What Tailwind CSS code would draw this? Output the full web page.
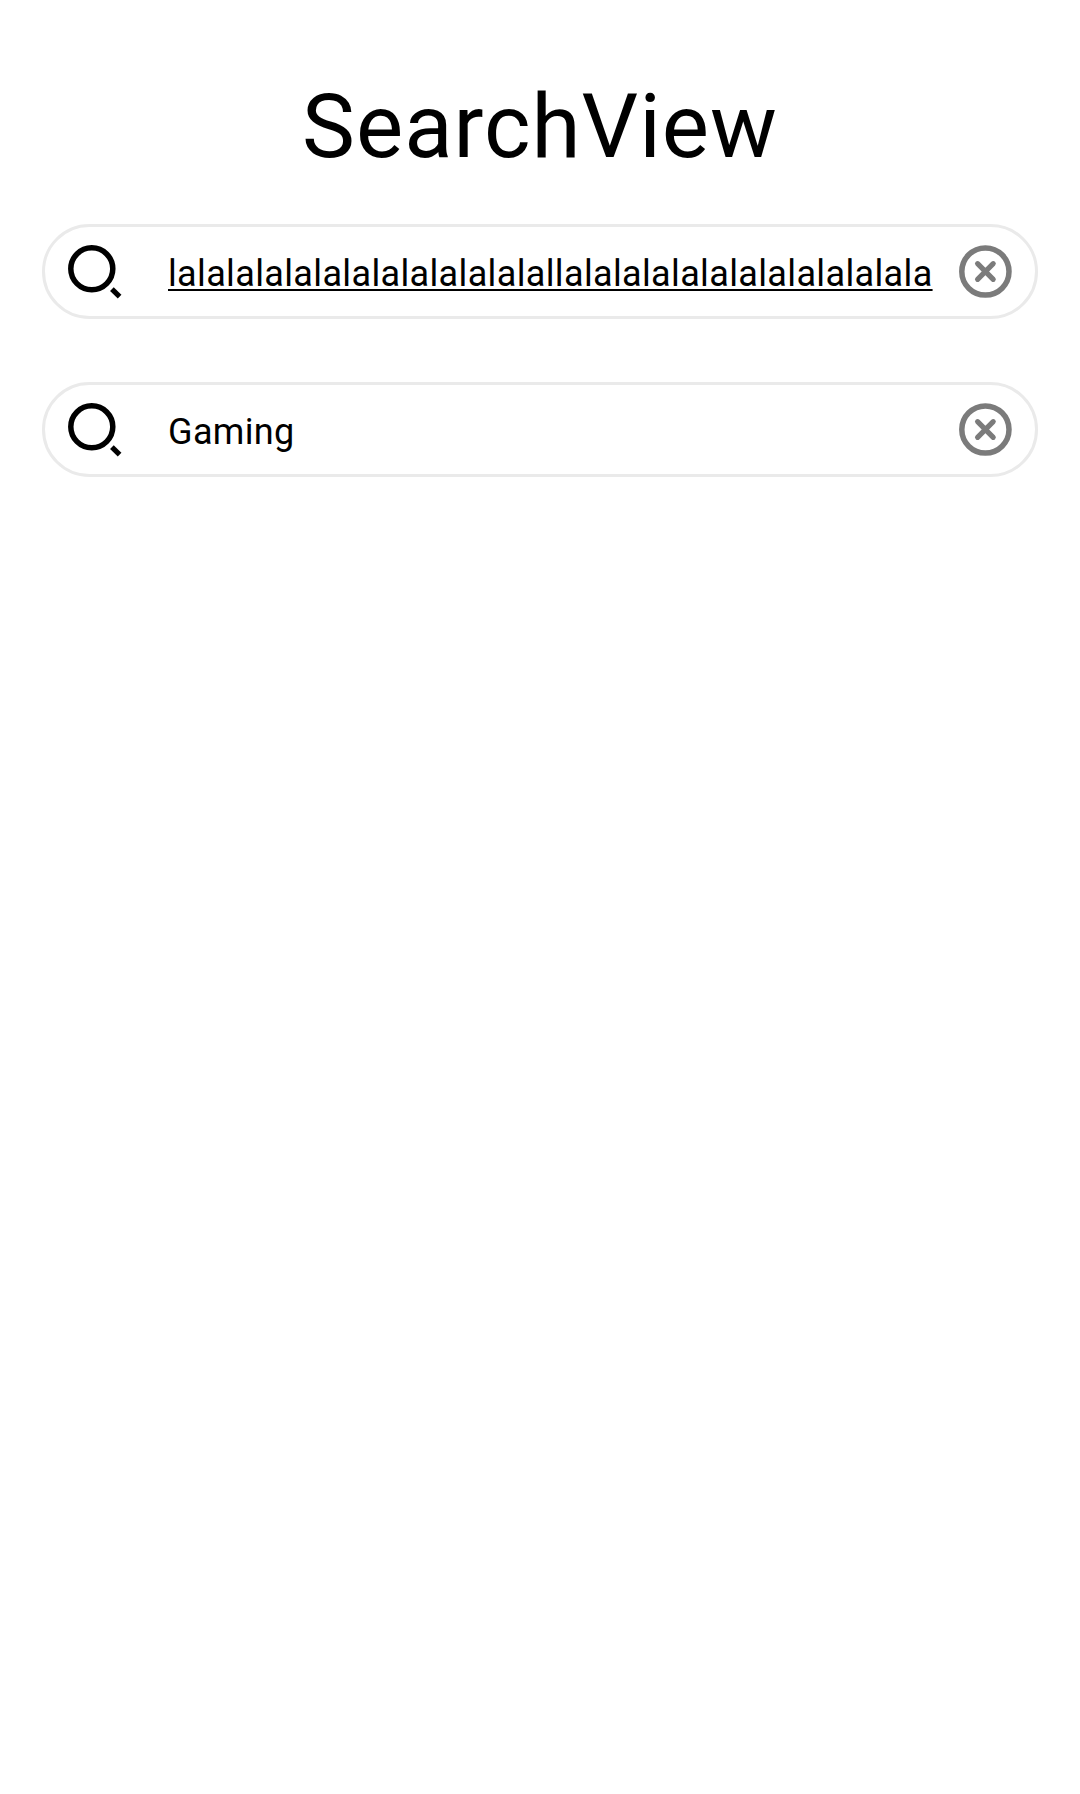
<!DOCTYPE html>
<html lang="en">
<head>
<meta charset="utf-8">
<title>SearchView</title>
<script src="https://cdn.jsdelivr.net/npm/@tailwindcss/browser@4"></script>
</head>
<body class="bg-white text-black font-[Roboto,sans-serif]">
<main class="flex h-[1794px] w-[1080px] flex-col px-[42px] pt-[75px]">
  <h1 class="h-[104px] text-center text-[89px] leading-[104px] font-normal tracking-[1px] whitespace-nowrap">SearchView</h1>
  <div class="mt-[45px] flex flex-col gap-[63px]">
    <div class="flex h-[95px] items-center rounded-full border-3 border-[#eaeaea] pr-[23px] pl-[23px]">
      <svg class="h-[54px] w-[54px] shrink-0" viewBox="0 0 54 54" fill="none" stroke="#000"><circle cx="23.8" cy="23.8" r="21" stroke-width="5.5"/><path d="M43.9 44.1L51.6 51.6" stroke-width="5.2"/></svg>
      <span class="ml-[46px] flex-1 pt-[4px] text-[36px] leading-[44px] tracking-[0.36px] whitespace-nowrap underline decoration-2 underline-offset-[3px]">lalalalalalalalalalalalalallalalalalalalalalalalalala</span>
      <svg class="h-[54px] w-[54px] shrink-0" viewBox="0 0 54 54" fill="none" stroke="#7b7b7b"><circle cx="27.4" cy="26.5" r="23.6" stroke-width="5.5"/><path d="M19.6 18.7L35.2 34.3M35.2 18.7L19.6 34.3" stroke-width="5.2" stroke-linecap="round"/></svg>
    </div>
    <div class="flex h-[95px] items-center rounded-full border-3 border-[#eaeaea] pr-[23px] pl-[23px]">
      <svg class="h-[54px] w-[54px] shrink-0" viewBox="0 0 54 54" fill="none" stroke="#000"><circle cx="23.8" cy="23.8" r="21" stroke-width="5.5"/><path d="M43.9 44.1L51.6 51.6" stroke-width="5.2"/></svg>
      <span class="ml-[46px] flex-1 pt-[4px] text-[36px] leading-[44px] tracking-[0.36px] whitespace-nowrap">Gaming</span>
      <svg class="h-[54px] w-[54px] shrink-0" viewBox="0 0 54 54" fill="none" stroke="#7b7b7b"><circle cx="27.4" cy="26.5" r="23.6" stroke-width="5.5"/><path d="M19.6 18.7L35.2 34.3M35.2 18.7L19.6 34.3" stroke-width="5.2" stroke-linecap="round"/></svg>
    </div>
  </div>
</main>
</body>
</html>
